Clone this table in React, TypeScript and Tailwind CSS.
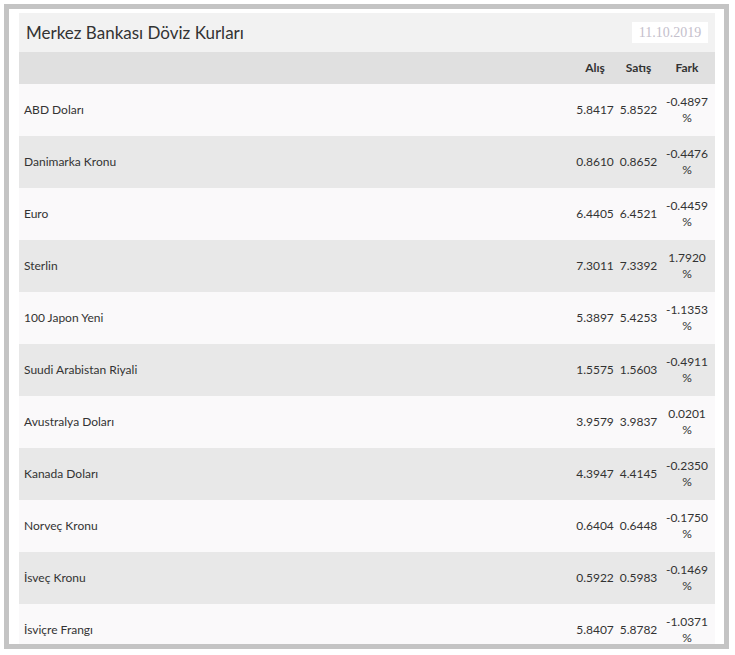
const rates = [
  { name: 'ABD Doları', buy: '5.8417', sell: '5.8522', diff: '-0.4897' },
  { name: 'Danimarka Kronu', buy: '0.8610', sell: '0.8652', diff: '-0.4476' },
  { name: 'Euro', buy: '6.4405', sell: '6.4521', diff: '-0.4459' },
  { name: 'Sterlin', buy: '7.3011', sell: '7.3392', diff: '1.7920' },
  { name: '100 Japon Yeni', buy: '5.3897', sell: '5.4253', diff: '-1.1353' },
  { name: 'Suudi Arabistan Riyali', buy: '1.5575', sell: '1.5603', diff: '-0.4911' },
  { name: 'Avustralya Doları', buy: '3.9579', sell: '3.9837', diff: '0.0201' },
  { name: 'Kanada Doları', buy: '4.3947', sell: '4.4145', diff: '-0.2350' },
  { name: 'Norveç Kronu', buy: '0.6404', sell: '0.6448', diff: '-0.1750' },
  { name: 'İsveç Kronu', buy: '0.5922', sell: '0.5983', diff: '-0.1469' },
  { name: 'İsviçre Frangı', buy: '5.8407', sell: '5.8782', diff: '-1.0371' },
];

const App = () => {
  return (
    <div className="min-h-screen bg-white p-1 font-['Lato','Liberation_Sans',sans-serif] text-[#333]">
      {/* Widget frame */}
      <div className="h-[645px] w-[725px] overflow-hidden border-[5px] border-[#c4c4c4] bg-white pt-[4px] pr-[9px] pl-[10px]">
        {/* Title bar */}
        <div className="flex h-[39px] items-center justify-between bg-[#f2f2f2] pr-[7px] pl-[7px]">
          <h2 className="text-[17px] font-normal text-[#333]">Merkez Bankası Döviz Kurları</h2>
          <div className="flex h-[21px] w-[76px] items-center justify-center bg-white font-['Liberation_Serif',serif] text-[14px] text-[#c4c0cc]">
            11.10.2019
          </div>
        </div>

        {/* Table */}
        <table className="w-full table-fixed border-collapse text-[12px]">
          <colgroup>
            <col />
            <col className="w-[46px]" />
            <col className="w-[41px]" />
            <col className="w-[56px]" />
          </colgroup>
          <thead>
            <tr className="h-[32px] bg-[#e0e0e0]">
              <th />
              <th className="text-center font-bold">Alış</th>
              <th className="text-center font-bold">Satış</th>
              <th className="text-center font-bold">Fark</th>
            </tr>
          </thead>
          <tbody>
            {rates.map((r, i) => (
              <tr key={r.name} className={`h-[52px] ${i % 2 === 0 ? 'bg-[#faf9fa]' : 'bg-[#e8e8e8]'}`}>
                <td className="pl-[5px] align-middle">{r.name}</td>
                <td className="text-center align-middle">{r.buy}</td>
                <td className="text-center align-middle">{r.sell}</td>
                <td className="text-center align-middle leading-[16px]">
                  <div>{r.diff}</div>
                  <div>%</div>
                </td>
              </tr>
            ))}
          </tbody>
        </table>
      </div>
    </div>
  );
};

export default App;
